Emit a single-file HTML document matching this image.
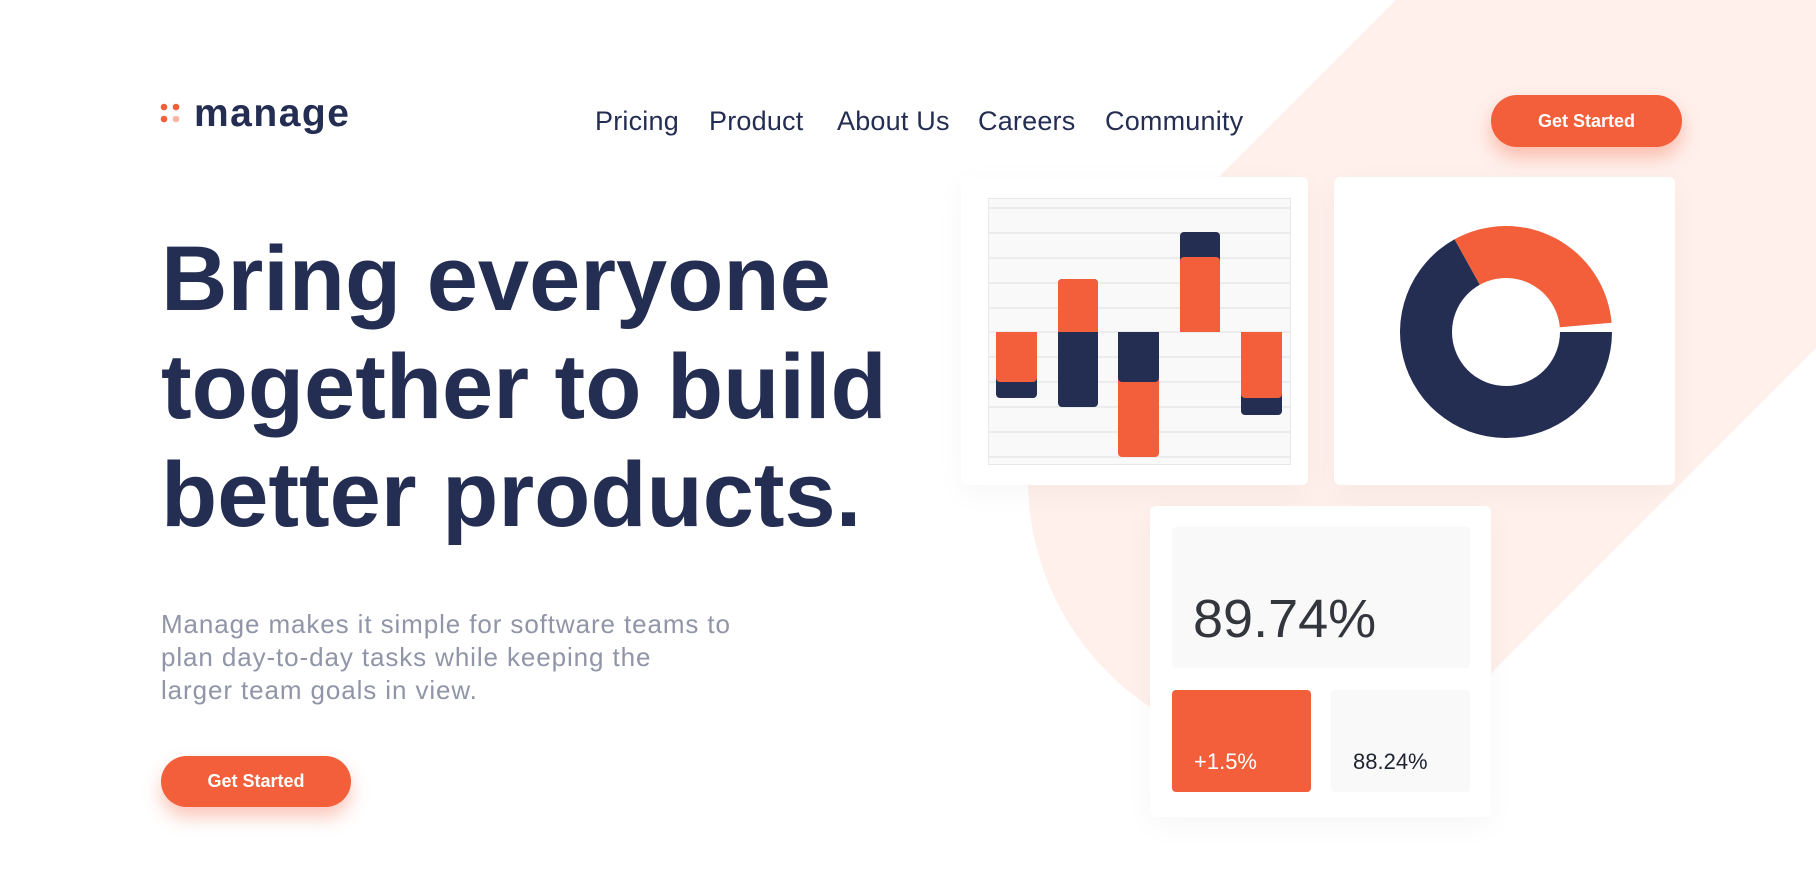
<!DOCTYPE html>
<html><head><meta charset="utf-8"><style>
*{margin:0;padding:0;box-sizing:border-box}
body{width:1816px;height:883px;overflow:hidden;background:#fff;font-family:"Liberation Sans",sans-serif;position:relative;color:#242d52}
.abs{position:absolute}
.nav{position:absolute;top:106px;font-size:27px;color:#242d52;letter-spacing:0.2px;line-height:30px}
.btn{position:absolute;background:#f25f3a;color:#fff;font-weight:bold;font-size:18px;border-radius:26px;display:flex;align-items:center;justify-content:center;box-shadow:0 10px 18px rgba(242,95,58,0.35)}
h1{position:absolute;left:161px;top:225px;font-size:92px;line-height:108px;font-weight:bold;color:#242d52;letter-spacing:0px}
p.sub{position:absolute;left:161px;top:608px;font-size:26px;line-height:33px;color:#9095a7;letter-spacing:0.9px;white-space:nowrap}
.card{position:absolute;background:#fff;border-radius:6px;box-shadow:0 8px 30px rgba(0,0,0,0.04)}
</style></head><body>
<svg class="abs" style="left:0;top:0" width="1816" height="883">
<circle cx="1300" cy="480" r="272" fill="#fff0ec"/>
<polygon points="1108,288 1492,672 2492,-328 2108,-712" fill="#fff0ec"/>
</svg>

<svg class="abs" style="left:160px;top:103px" width="22" height="22">
<circle cx="4" cy="4" r="3.3" fill="#f25f3a"/><circle cx="16" cy="4" r="3.3" fill="#f25f3a"/>
<circle cx="4" cy="16" r="3.3" fill="#f25f3a"/><circle cx="16" cy="16" r="3.3" fill="#f9b5a2"/>
</svg>
<div class="abs" style="left:194px;top:92px;font-size:39px;font-weight:bold;letter-spacing:1.5px;color:#242d52;line-height:44px">manage</div>

<div class="nav" style="left:595px">Pricing</div>
<div class="nav" style="left:709px">Product</div>
<div class="nav" style="left:837px">About Us</div>
<div class="nav" style="left:978px">Careers</div>
<div class="nav" style="left:1105px">Community</div>

<div class="btn" style="left:1491px;top:95px;width:191px;height:52px">Get Started</div>

<h1>Bring everyone<br>together to build<br>better products.</h1>
<p class="sub">Manage makes it simple for software teams to<br>plan day-to-day tasks while keeping the<br>larger team goals in view.</p>
<div class="btn" style="left:161px;top:756px;width:190px;height:51px">Get Started</div>

<div class="card" style="left:961px;top:177px;width:347px;height:308px"></div>
<svg class="abs" style="left:988px;top:198px" width="303" height="268">
<rect x="0.5" y="0.5" width="302" height="266" fill="#f9f9f9" stroke="#e8e8e8"/>
<g stroke="#e8e8e8" stroke-width="1.5">
<line x1="0" x2="302" y1="10" y2="10"/><line x1="0" x2="302" y1="35" y2="35"/><line x1="0" x2="302" y1="60" y2="60"/><line x1="0" x2="302" y1="85" y2="85"/><line x1="0" x2="302" y1="110" y2="110"/><line x1="0" x2="302" y1="134" y2="134"/><line x1="0" x2="302" y1="159" y2="159"/><line x1="0" x2="302" y1="184" y2="184"/><line x1="0" x2="302" y1="209" y2="209"/><line x1="0" x2="302" y1="234" y2="234"/><line x1="0" x2="302" y1="259" y2="259"/>
</g>
<rect x="8" y="134" width="41" height="66" rx="4" fill="#242d52"/>
<rect x="8" y="134" width="41" height="50" rx="4" fill="#f25f3a"/><rect x="8" y="134" width="41" height="10" fill="#f25f3a"/>
<rect x="70" y="81" width="40" height="128" rx="4" fill="#242d52"/>
<rect x="70" y="81" width="40" height="53" rx="4" fill="#f25f3a"/><rect x="70" y="124" width="40" height="10" fill="#f25f3a"/>
<rect x="130" y="134" width="41" height="125" rx="4" fill="#f25f3a"/>
<rect x="130" y="134" width="41" height="50" rx="4" fill="#242d52"/><rect x="130" y="134" width="41" height="10" fill="#242d52"/>
<rect x="192" y="34" width="40" height="100" rx="4" fill="#242d52"/>
<rect x="192" y="59" width="40" height="75" rx="4" fill="#f25f3a"/><rect x="192" y="124" width="40" height="10" fill="#f25f3a"/>
<rect x="253" y="134" width="41" height="83" rx="4" fill="#242d52"/>
<rect x="253" y="134" width="41" height="66" rx="4" fill="#f25f3a"/><rect x="253" y="134" width="41" height="10" fill="#f25f3a"/>
</svg>

<div class="card" style="left:1334px;top:177px;width:341px;height:308px"></div>
<svg class="abs" style="left:1334px;top:177px" width="341" height="308">
<g transform="translate(172,155)">
<path d="M106 0 A106 106 0 1 1 -51.4 -92.7 L-26.2 -47.2 A54 54 0 1 0 54 0 Z" fill="#242d52"/>
<path d="M-51.4 -92.7 A106 106 0 0 1 105.6 -9.2 L53.8 -4.7 A54 54 0 0 0 -26.2 -47.2 Z" fill="#f25f3a"/>
</g>
</svg>

<div class="card" style="left:1150px;top:506px;width:341px;height:311px"></div>
<div class="abs" style="left:1172px;top:527px;width:298px;height:141px;background:#f9f9f9;border-radius:4px"></div>
<div class="abs" style="left:1193px;top:589px;font-size:54px;line-height:60px;color:#33363d">89.74%</div>
<div class="abs" style="left:1172px;top:690px;width:139px;height:102px;background:#f25f3a;border-radius:4px"></div>
<div class="abs" style="left:1194px;top:749px;font-size:22px;line-height:26px;color:#fff">+1.5%</div>
<div class="abs" style="left:1331px;top:690px;width:139px;height:102px;background:#f9f9f9;border-radius:4px"></div>
<div class="abs" style="left:1353px;top:749px;font-size:22px;line-height:26px;color:#1e2330">88.24%</div>
</body></html>
